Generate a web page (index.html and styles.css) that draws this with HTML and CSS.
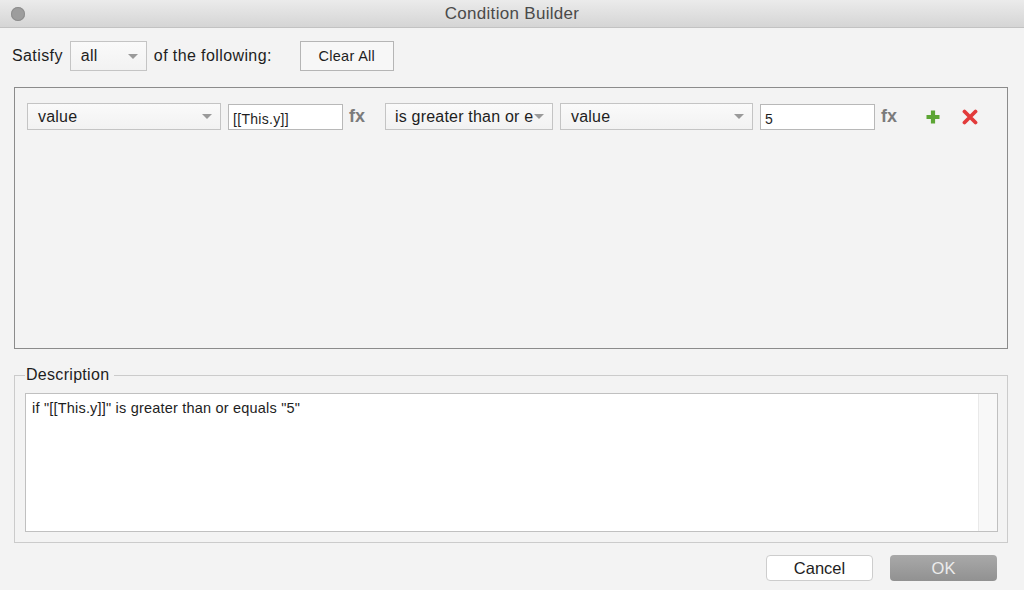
FILE: index.html
```html
<!DOCTYPE html>
<html lang="en">
<head>
  <meta charset="UTF-8">
  <meta name="viewport" content="width=device-width, initial-scale=1.0">
  <title>Condition Builder</title>
  <link rel="stylesheet" href="styles.css">
</head>
<body>
<div class="window">
  <div class="titlebar">
    <span class="close-dot"></span>
    <span class="title">Condition Builder</span>
  </div>

  <div class="satisfy-row">
    <span class="label">Satisfy</span>
    <div class="select select-all"><span>all</span><span class="caret"></span></div>
    <span class="label">of the following:</span>
    <button class="push clear-all">Clear All</button>
  </div>

  <div class="rules">
    <div class="rule">
      <div class="select select-value"><span>value</span><span class="caret"></span></div>
      <div class="field">[[This.y]]</div>
      <span class="fx">fx</span>
      <div class="select select-op"><span>is greater than or e</span><span class="caret"></span></div>
      <div class="select select-value2"><span>value</span><span class="caret"></span></div>
      <div class="field">5</div>
      <span class="fx">fx</span>
      <svg class="icon add" width="16" height="16" viewBox="0 0 16 16">
        <path d="M8 1.5v13M1.5 8h13" stroke="#5ca534" stroke-width="4.2"/>
      </svg>
      <svg class="icon remove" width="16" height="16" viewBox="0 0 16 16">
        <path d="M2.5 2.5l11 11M13.5 2.5l-11 11" stroke="#e23b3b" stroke-width="3.8" stroke-linecap="round"/>
      </svg>
    </div>
  </div>

  <fieldset class="description">
    <legend>Description</legend>
    <div class="desc-box">
      <div class="desc-text">if "[[This.y]]" is greater than or equals "5"</div>
      <div class="desc-scroll"></div>
    </div>
  </fieldset>

  <div class="actions">
    <button class="push cancel">Cancel</button>
    <button class="push ok">OK</button>
  </div>
</div>
</body>
</html>
```

FILE: styles.css
```css
body {
  margin: 0;
  background-color: #f3f3f3;
  color: #1e1e1e;
  font-family: "Liberation Sans", Arial, Helvetica, sans-serif;
  font-size: 16px;
}

.window {
  width: 1024px;
  height: 590px;
  overflow: hidden;
}

.titlebar {
  height: 28px;
  display: flex;
  align-items: center;
  justify-content: center;
  position: relative;
  background: linear-gradient(#ebebeb, #d5d5d5);
  border-bottom: 1px solid #c2c2c2;
  box-sizing: border-box;
}

.close-dot {
  position: absolute;
  left: 11px;
  top: 7px;
  width: 14px;
  height: 14px;
  border-radius: 50%;
  background-color: #9d9d9d;
  box-shadow: inset 0 0 0 1px #8e8e8e;
}

.title {
  font-size: 17px;
  color: #4a4a4a;
  letter-spacing: 0.3px;
}

.satisfy-row {
  display: flex;
  align-items: center;
  height: 30px;
  margin: 13px 0 0 12px;
}

.label {
  font-size: 16px;
  letter-spacing: 0.4px;
}

.select {
  display: flex;
  align-items: center;
  justify-content: space-between;
  box-sizing: border-box;
  border: 1px solid #c4c4c4;
  background: linear-gradient(#fafafa, #f2f2f2);
  padding: 0 8px 0 10px;
  font-size: 16px;
  letter-spacing: 0.2px;
}

.caret {
  width: 0;
  height: 0;
  border-left: 5px solid transparent;
  border-right: 5px solid transparent;
  border-top: 5px solid #9a9a9a;
}

.select-all {
  width: 77px;
  height: 30px;
  margin: 0 7px 0 7px;
}

.push {
  font-family: inherit;
  box-sizing: border-box;
  cursor: pointer;
}

.clear-all {
  margin-left: 28px;
  width: 94px;
  height: 30px;
  border: 1px solid #b5b5b5;
  background-color: #f7f7f7;
  font-size: 14.5px;
  color: #1e1e1e;
  letter-spacing: 0.3px;
}

.rules {
  margin: 16px 0 0 14px;
  width: 994px;
  height: 262px;
  box-sizing: border-box;
  border: 1px solid #8b8b8b;
  padding: 15px 12px;
}

.rule {
  display: flex;
  align-items: center;
  height: 27px;
}

.rule .select {
  height: 27px;
}

.select-value { width: 194px; }
.select-op { width: 168px; margin-left: 18px; padding-left: 9px; }
.select-value2 { width: 193px; margin-left: 7px; }

.field {
  width: 115px;
  height: 26px;
  margin-left: 7px;
  box-sizing: border-box;
  border: 1px solid #b8b8b8;
  background-color: #fff;
  font-size: 14px;
  padding: 6px 0 0 4px;
  letter-spacing: 0.3px;
}

.fx {
  margin-left: 6px;
  width: 18px;
  font-size: 18px;
  font-weight: bold;
  color: #7b7b7b;
}

.icon {
  display: block;
}

.add { margin-left: 26px; }
.remove { margin-left: 21px; }

.description {
  margin: 17px 0 0 14px;
  width: 994px;
  height: 177px;
  box-sizing: border-box;
  border: 1px solid #cbcbcb;
  padding: 9px 9px 10px 10px;
}

.description legend {
  padding: 0 5px 0 1px;
  font-size: 16px;
  line-height: 18px;
  letter-spacing: 0.3px;
}

.desc-box {
  display: flex;
  height: 139px;
  box-sizing: border-box;
  border: 1px solid #c0c0c0;
  background-color: #fff;
}

.desc-text {
  flex: 1;
  padding: 6px 0 0 6px;
  font-size: 14.5px;
  letter-spacing: 0.2px;
}

.desc-scroll {
  width: 18px;
  background-color: #f8f8f8;
  border-left: 1px solid #e9e9e9;
}

.actions {
  display: flex;
  justify-content: flex-end;
  margin: 12px 27px 0 0;
}

.actions .push {
  width: 107px;
  height: 26px;
  border-radius: 4px;
  font-size: 16.5px;
}

.cancel {
  border: 1px solid #cdcdcd;
  background-color: #fff;
  color: #1e1e1e;
}

.ok {
  margin-left: 17px;
  border: none;
  background: linear-gradient(#a9a9a9, #919191);
  color: #ececec;
}
```
